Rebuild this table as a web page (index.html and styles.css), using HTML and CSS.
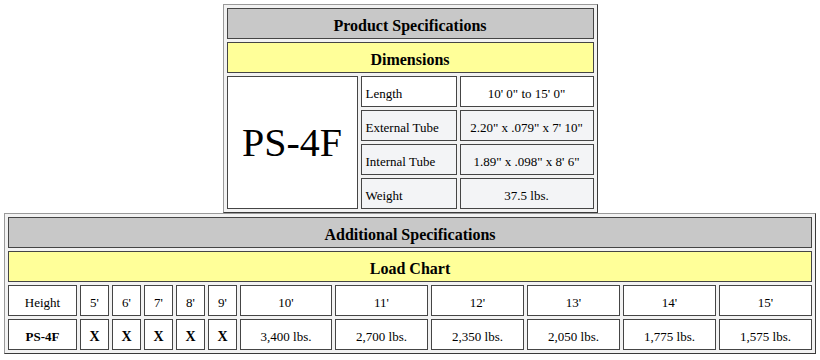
FILE: index.html
```html
<!DOCTYPE html>
<html lang="en">
<head>
<meta charset="utf-8">
<title>Product Specifications</title>
<link rel="stylesheet" href="styles.css">
</head>
<body>
<table class="grid spec">
  <tr><th colspan="3" class="head">Product Specifications</th></tr>
  <tr><th colspan="3" class="sub">Dimensions</th></tr>
  <tr>
    <td rowspan="4" class="model">PS-4F</td>
    <td class="label">Length</td>
    <td class="value">10' 0" to 15' 0"</td>
  </tr>
  <tr class="alt">
    <td class="label">External Tube</td>
    <td class="value">2.20" x .079" x 7' 10"</td>
  </tr>
  <tr class="alt">
    <td class="label">Internal Tube</td>
    <td class="value">1.89" x .098" x 8' 6"</td>
  </tr>
  <tr class="alt">
    <td class="label">Weight</td>
    <td class="value">37.5 lbs.</td>
  </tr>
</table>
<table class="grid load">
  <tr><th colspan="12" class="head">Additional Specifications</th></tr>
  <tr><th colspan="12" class="sub">Load Chart</th></tr>
  <tr>
    <td class="hcol">Height</td>
    <td class="ft">5'</td>
    <td class="ft">6'</td>
    <td class="ft">7'</td>
    <td class="ft">8'</td>
    <td class="ft">9'</td>
    <td class="num first">10'</td>
    <td class="num">11'</td>
    <td class="num">12'</td>
    <td class="num">13'</td>
    <td class="num">14'</td>
    <td class="num">15'</td>
  </tr>
  <tr>
    <td class="hcol strong">PS-4F</td>
    <td class="ft strong">X</td>
    <td class="ft strong">X</td>
    <td class="ft strong">X</td>
    <td class="ft strong">X</td>
    <td class="ft strong">X</td>
    <td class="num first">3,400 lbs.</td>
    <td class="num">2,700 lbs.</td>
    <td class="num">2,350 lbs.</td>
    <td class="num">2,050 lbs.</td>
    <td class="num">1,775 lbs.</td>
    <td class="num">1,575 lbs.</td>
  </tr>
</table>
</body>
</html>
```
FILE: styles.css
```css
html, body {
  margin: 0;
  background: #ffffff;
}
body {
  padding-top: 4px;
  font-family: "Liberation Serif", "Times New Roman", serif;
  font-size: 13px;
  color: #000000;
}
.grid {
  border-collapse: separate;
  border-spacing: 3px;
  margin: 0 auto;
  background: #f2f2f2;
  border: 1px solid;
  border-color: #9a9a9a #3a3a3a #3a3a3a #9a9a9a;
}
.grid th,
.grid td {
  box-sizing: border-box;
  height: 31px;
  padding: 4px 0 0;
  border: 1px solid #454545;
  background: #ffffff;
  text-align: center;
  vertical-align: middle;
  white-space: nowrap;
}
.grid th {
  font-size: 16px;
  font-weight: bold;
}
.grid th.head {
  background: #c8c8c8;
}
.grid th.sub {
  background: #ffff99;
}
.spec .model {
  width: 131px;
  padding: 0;
  font-size: 40px;
}
.spec .label {
  width: 96px;
  text-align: left;
  padding-left: 4px;
}
.spec .value {
  width: 134px;
}
.spec .alt td {
  background: #f3f4f6;
}
.load .hcol {
  width: 69px;
}
.load .ft {
  width: 29px;
}
.load .num {
  width: 93px;
}
.load .num.first {
  width: 92px;
}
.load .strong {
  font-weight: bold;
}
.load .ft.strong {
  font-size: 14px;
}
```
